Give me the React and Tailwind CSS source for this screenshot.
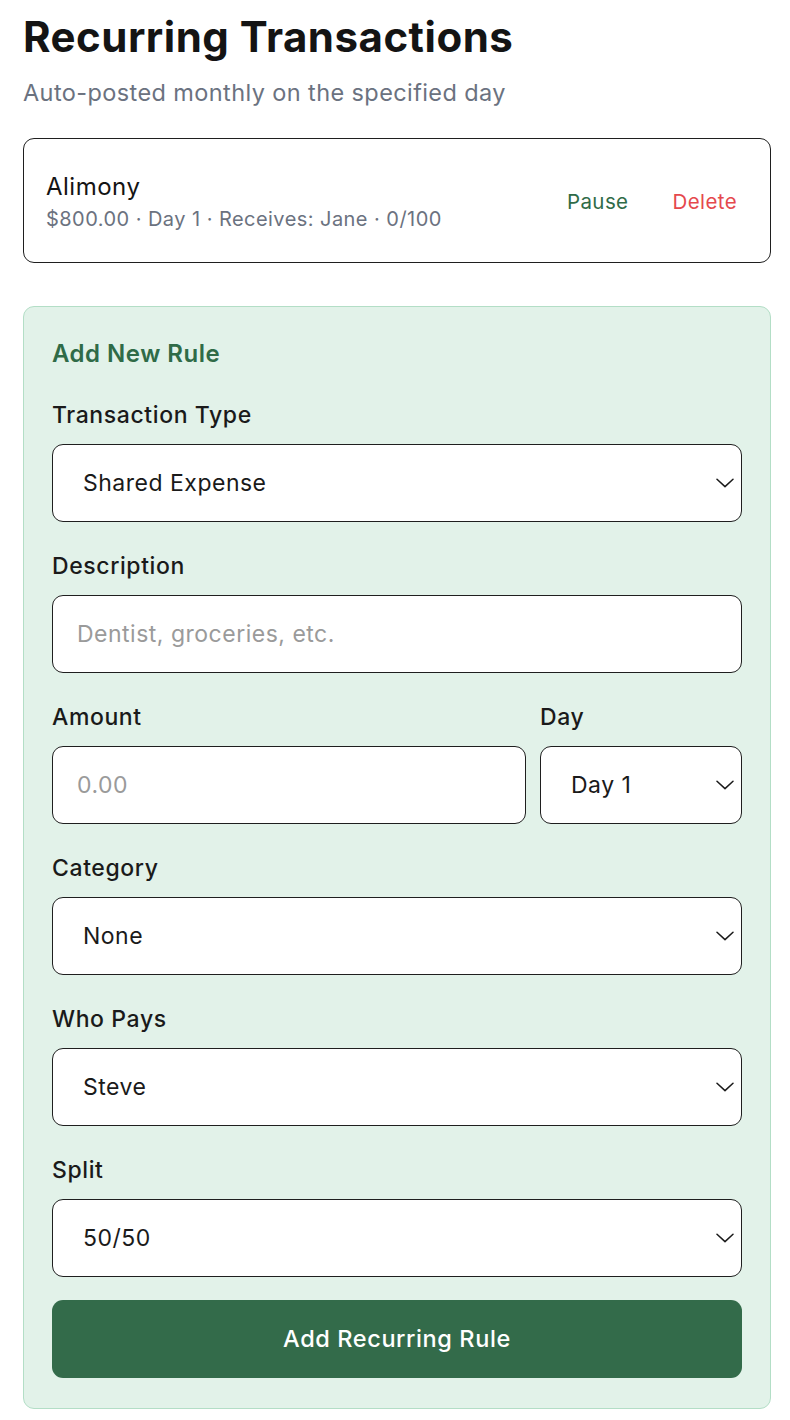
const inputClass =
  "w-full h-[78.4px] rounded-[11px] border border-[#1f1f1f] bg-white px-[24px] text-[23px] tracking-[0.5px] text-[#1a1a1a] placeholder:text-[#9a9a9a] outline-none";

const Label = ({ children }) => (
  <label className="block mb-[11.2px] text-[23px] tracking-[0.6px] leading-[33.6px] font-medium text-[#1a1a1a]">
    {children}
  </label>
);

const Chevron = () => (
  <svg
    className="pointer-events-none absolute right-[8px] top-1/2 -translate-y-1/2"
    width="18"
    height="10"
    viewBox="0 0 18 10"
    fill="none"
  >
    <path d="M1 1.2L9 8.6L17 1.2" stroke="#1a1a1a" strokeWidth="1.5" strokeLinecap="round" strokeLinejoin="round" />
  </svg>
);

const Select = ({ value, options }) => (
  <div className="relative">
    <select
      defaultValue={value}
      className="w-full h-[78.4px] appearance-none rounded-[11px] border border-[#1f1f1f] bg-white pl-[30px] pr-[48px] text-[23px] tracking-[0.5px] text-[#1a1a1a] outline-none"
    >
      {options.map((o) => (
        <option key={o}>{o}</option>
      ))}
    </select>
    <Chevron />
  </div>
);

const App = () => {
  return (
    <div
      className="min-h-screen bg-white pl-[23px] pr-[19px] pt-[12px] pb-[11px]"
      style={{ fontFamily: "Inter, 'Noto Sans', sans-serif" }}
    >
      {/* Header */}
      <h1 className="text-[42px] leading-[50px] font-bold tracking-[0.5px] text-[#141414]">
        Recurring Transactions
      </h1>
      <p className="mt-[14px] text-[23.5px] leading-[33.6px] tracking-[0.4px] text-[#6b7280]">
        Auto-posted monthly on the specified day
      </p>

      {/* Existing rule */}
      <div className="mt-[28px] flex items-center justify-between rounded-[11px] border border-[#1f1f1f] pl-[22px] pr-[19px] h-[125px]">
        <div className="mt-[3px]">
          <h3 className="text-[24px] leading-[33.6px] tracking-[0.5px] text-[#141414]">Alimony</h3>
          <p className="mt-[1px] text-[20px] leading-[28px] tracking-[0.45px] text-[#6b7280]">
            $800.00 · Day 1 · Receives: Jane · 0/100
          </p>
        </div>
        <div className="flex items-center gap-[16px] text-[20.5px] tracking-[0.4px] mt-[4px]">
          <button className="px-[14px] py-[6px] text-[#2f6b47]">Pause</button>
          <button className="px-[14px] py-[6px] text-[#e5484d]">Delete</button>
        </div>
      </div>

      {/* Add form */}
      <div className="mt-[43px] rounded-[11px] border border-[#b3dec6] bg-[#e2f2e9] px-[28px] pt-[30px] pb-[30px]">
        <h2 className="text-[24px] leading-[33.6px] tracking-[0.5px] font-semibold text-[#2f6b47]">
          Add New Rule
        </h2>

        <div className="mt-[29px] flex flex-col gap-[27.8px]">
          <div>
            <Label>Transaction Type</Label>
            <Select value="Shared Expense" options={["Shared Expense", "Payment", "Income"]} />
          </div>

          <div>
            <Label>Description</Label>
            <input className={inputClass} placeholder="Dentist, groceries, etc." />
          </div>

          <div className="flex gap-[14px]">
            <div className="flex-1">
              <Label>Amount</Label>
              <input className={inputClass} placeholder="0.00" />
            </div>
            <div className="w-[202px]">
              <Label>Day</Label>
              <Select value="Day 1" options={["Day 1", "Day 2", "Day 3"]} />
            </div>
          </div>

          <div>
            <Label>Category</Label>
            <Select value="None" options={["None", "Medical", "Groceries"]} />
          </div>

          <div>
            <Label>Who Pays</Label>
            <Select value="Steve" options={["Steve", "Jane"]} />
          </div>

          <div>
            <Label>Split</Label>
            <Select value="50/50" options={["50/50", "60/40", "100/0"]} />
          </div>
        </div>

        <button className="mt-[22.4px] w-full h-[78.4px] rounded-[11px] bg-[#336b4a] text-[23.5px] tracking-[0.6px] font-medium text-white">
          Add Recurring Rule
        </button>
      </div>
    </div>
  );
};

export default App;
